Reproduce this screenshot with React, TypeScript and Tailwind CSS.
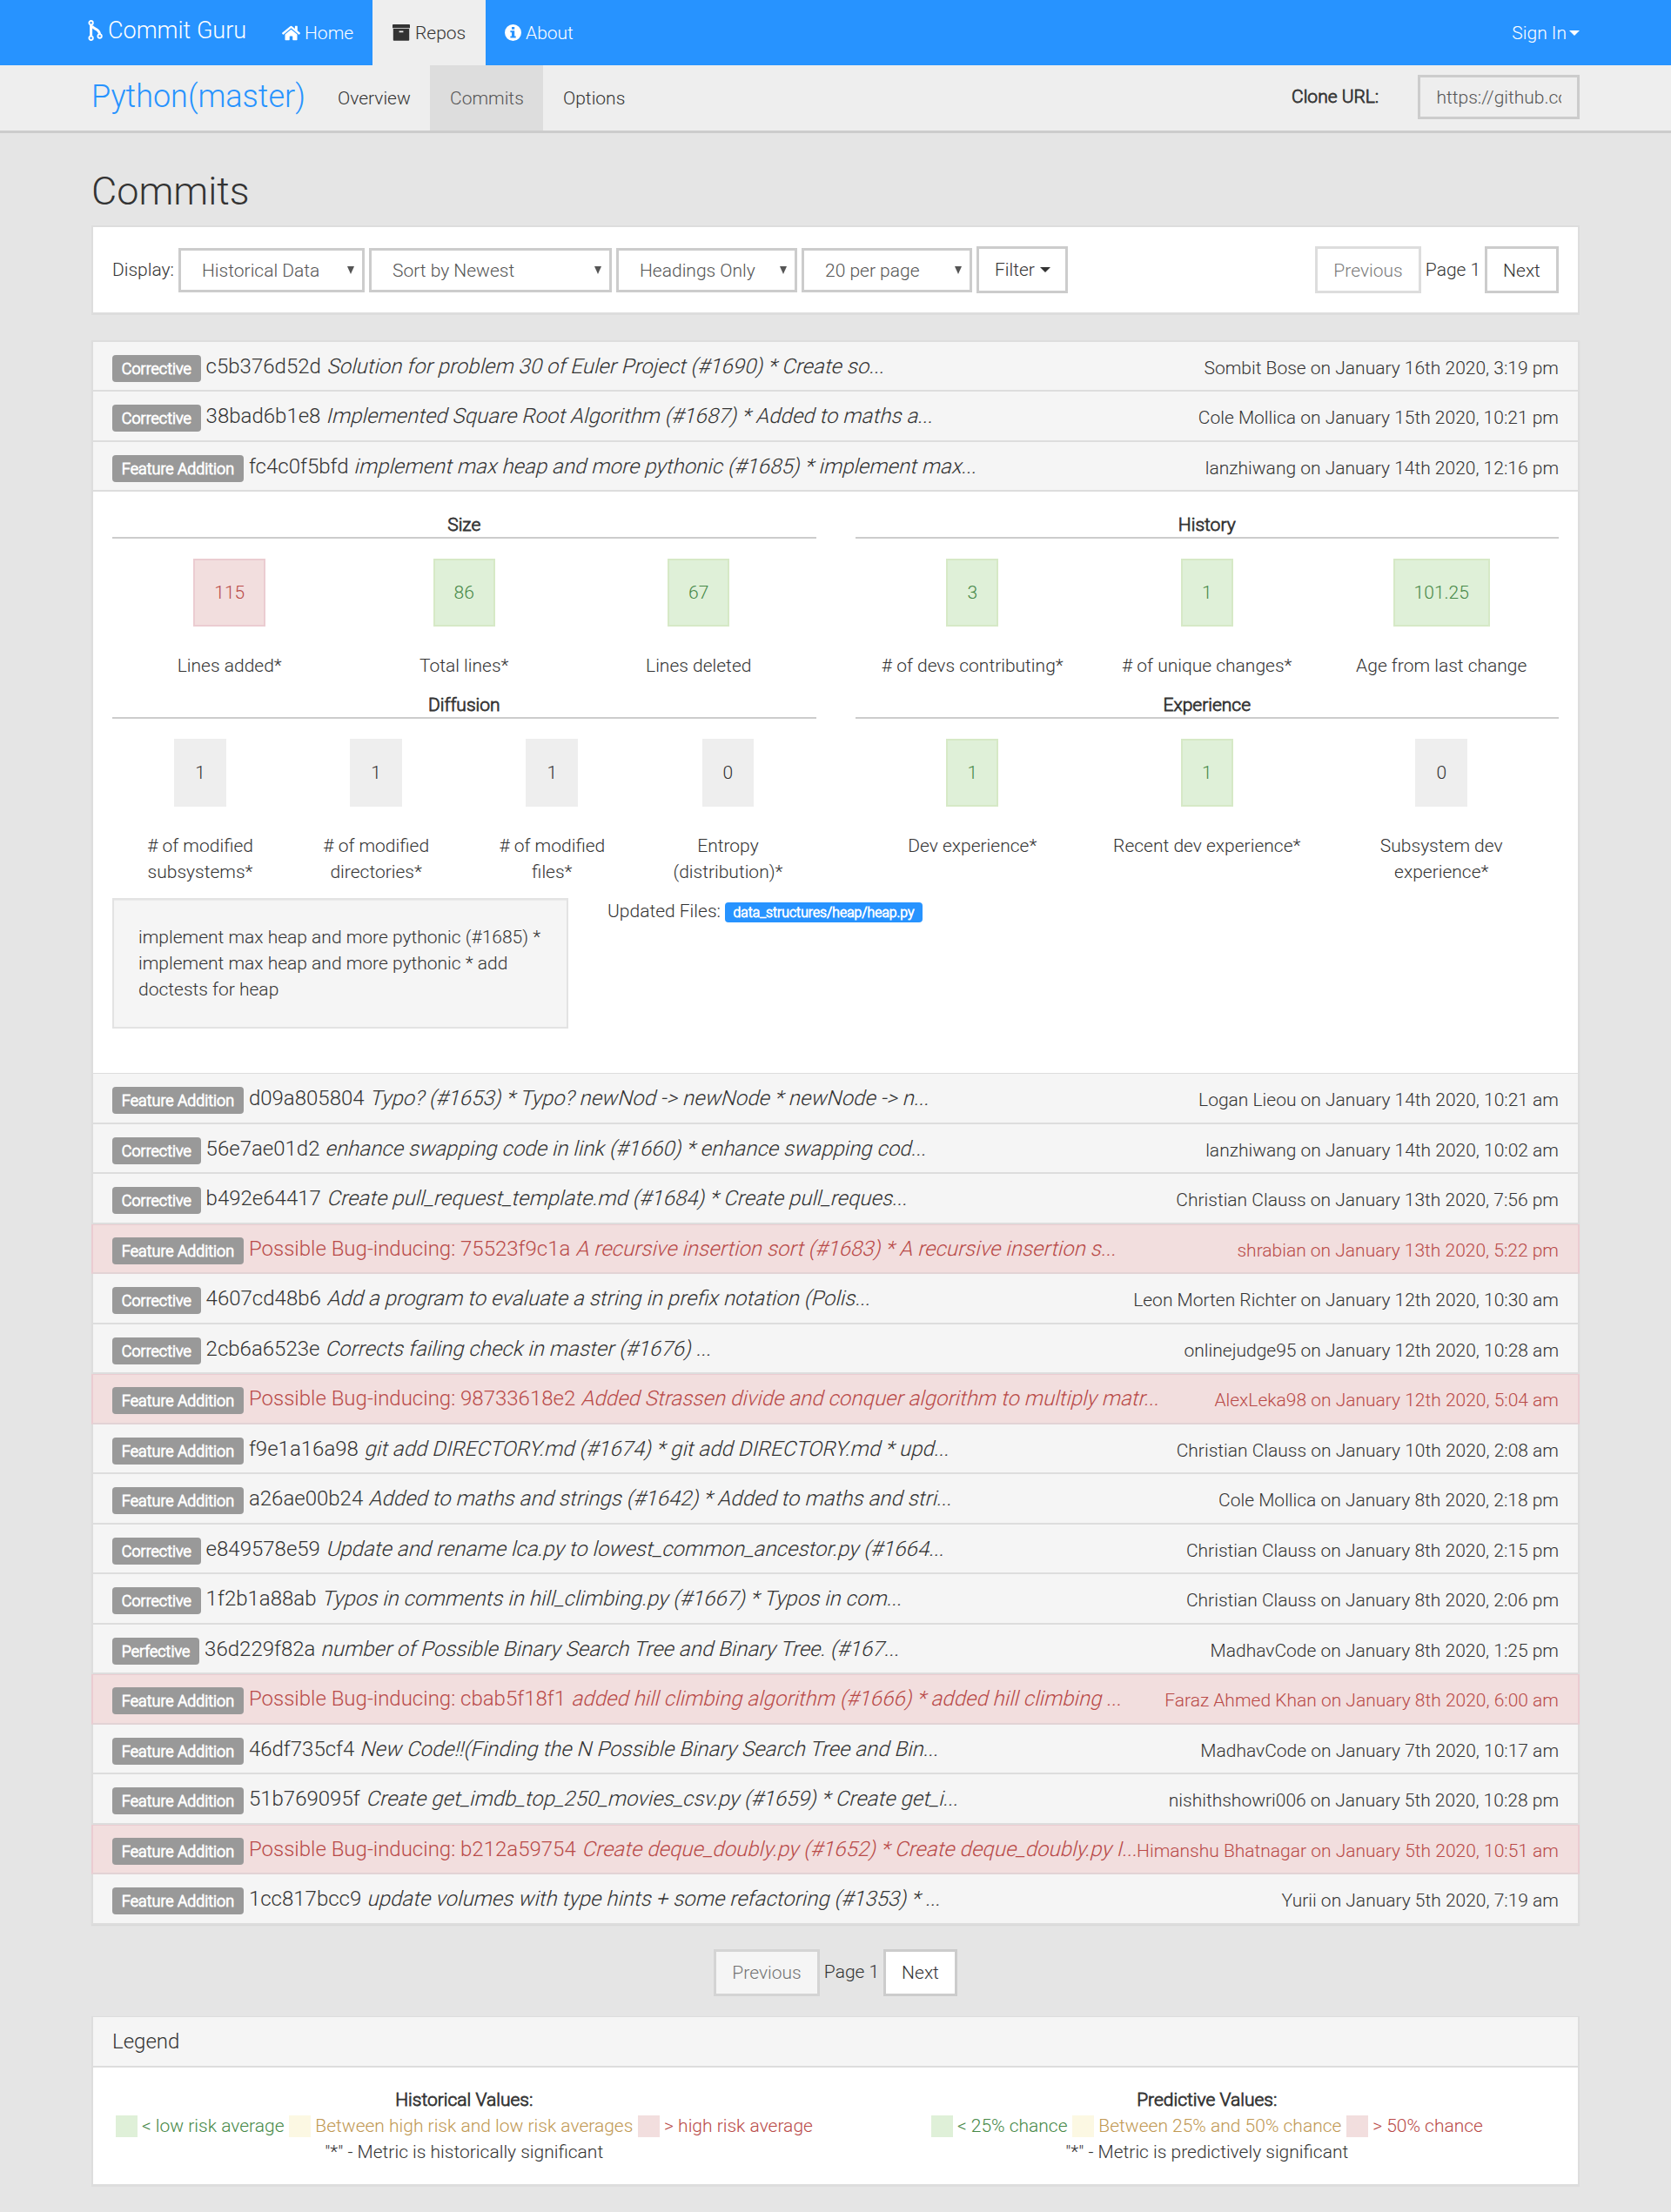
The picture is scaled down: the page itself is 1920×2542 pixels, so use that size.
import React from "react";
import { FaHome } from "react-icons/fa";

type Commit = {
  kind: string;
  hash: string;
  message: string;
  meta: string;
  bug?: boolean;
};

const recent: Commit[] = [
  { kind: "Corrective", hash: "c5b376d52d", message: "Solution for problem 30 of Euler Project (#1690) * Create so...", meta: "Sombit Bose on January 16th 2020, 3:19 pm" },
  { kind: "Corrective", hash: "38bad6b1e8", message: "Implemented Square Root Algorithm (#1687) * Added to maths a...", meta: "Cole Mollica on January 15th 2020, 10:21 pm" },
  { kind: "Feature Addition", hash: "fc4c0f5bfd", message: "implement max heap and more pythonic (#1685) * implement max...", meta: "lanzhiwang on January 14th 2020, 12:16 pm" },
];

const older: Commit[] = [
  { kind: "Feature Addition", hash: "d09a805804", message: "Typo? (#1653) * Typo? newNod -> newNode * newNode -> n...", meta: "Logan Lieou on January 14th 2020, 10:21 am" },
  { kind: "Corrective", hash: "56e7ae01d2", message: "enhance swapping code in link (#1660) * enhance swapping cod...", meta: "lanzhiwang on January 14th 2020, 10:02 am" },
  { kind: "Corrective", hash: "b492e64417", message: "Create pull_request_template.md (#1684) * Create pull_reques...", meta: "Christian Clauss on January 13th 2020, 7:56 pm" },
  { kind: "Feature Addition", hash: "75523f9c1a", message: "A recursive insertion sort (#1683) * A recursive insertion s...", meta: "shrabian on January 13th 2020, 5:22 pm", bug: true },
  { kind: "Corrective", hash: "4607cd48b6", message: "Add a program to evaluate a string in prefix notation (Polis...", meta: "Leon Morten Richter on January 12th 2020, 10:30 am" },
  { kind: "Corrective", hash: "2cb6a6523e", message: "Corrects failing check in master (#1676) ...", meta: "onlinejudge95 on January 12th 2020, 10:28 am" },
  { kind: "Feature Addition", hash: "98733618e2", message: "Added Strassen divide and conquer algorithm to multiply matr...", meta: "AlexLeka98 on January 12th 2020, 5:04 am", bug: true },
  { kind: "Feature Addition", hash: "f9e1a16a98", message: "git add DIRECTORY.md (#1674) * git add DIRECTORY.md * upd...", meta: "Christian Clauss on January 10th 2020, 2:08 am" },
  { kind: "Feature Addition", hash: "a26ae00b24", message: "Added to maths and strings (#1642) * Added to maths and stri...", meta: "Cole Mollica on January 8th 2020, 2:18 pm" },
  { kind: "Corrective", hash: "e849578e59", message: "Update and rename lca.py to lowest_common_ancestor.py (#1664...", meta: "Christian Clauss on January 8th 2020, 2:15 pm" },
  { kind: "Corrective", hash: "1f2b1a88ab", message: "Typos in comments in hill_climbing.py (#1667) * Typos in com...", meta: "Christian Clauss on January 8th 2020, 2:06 pm" },
  { kind: "Perfective", hash: "36d229f82a", message: "number of Possible Binary Search Tree and Binary Tree. (#167...", meta: "MadhavCode on January 8th 2020, 1:25 pm" },
  { kind: "Feature Addition", hash: "cbab5f18f1", message: "added hill climbing algorithm (#1666) * added hill climbing ...", meta: "Faraz Ahmed Khan on January 8th 2020, 6:00 am", bug: true },
  { kind: "Feature Addition", hash: "46df735cf4", message: "New Code!!(Finding the N Possible Binary Search Tree and Bin...", meta: "MadhavCode on January 7th 2020, 10:17 am" },
  { kind: "Feature Addition", hash: "51b769095f", message: "Create get_imdb_top_250_movies_csv.py (#1659) * Create get_i...", meta: "nishithshowri006 on January 5th 2020, 10:28 pm" },
  { kind: "Feature Addition", hash: "b212a59754", message: "Create deque_doubly.py (#1652) * Create deque_doubly.py I...", meta: "Himanshu Bhatnagar on January 5th 2020, 10:51 am", bug: true },
  { kind: "Feature Addition", hash: "1cc817bcc9", message: "update volumes with type hints + some refactoring (#1353) * ...", meta: "Yurii on January 5th 2020, 7:19 am" },
];

function MergeIcon() {
  return (
    <svg className="-mt-[6px] h-6 w-[17px]" viewBox="0 0 17 24" fill="none" stroke="currentColor" strokeWidth="1.9">
      <circle cx="3.6" cy="3.2" r="2.2" />
      <circle cx="3.6" cy="20.8" r="2.2" />
      <circle cx="13.6" cy="18.6" r="2.2" />
      <path d="M3.6 5.4V18.6" strokeWidth="3" />
      <path d="M4.6 6.6C5.4 10.6 12.8 9.2 13.6 16.4" strokeWidth="3" />
    </svg>
  );
}

function ArchiveIcon() {
  return (
    <svg className="h-[19px] w-5" viewBox="0 0 20 19" fill="currentColor">
      <path d="M0.8 0h18.4q.8 0 .8.8v3.4H0V.8Q0 0 .8 0Z" />
      <path fillRule="evenodd" d="M.8 5h18.4v12.9q0 .8-.8.8H1.6q-.8 0-.8-.8ZM7.6 7.6v1.6h4.8V7.6Z" />
    </svg>
  );
}

function InfoIcon() {
  return (
    <svg className="h-[19px] w-[19px]" viewBox="0 0 19 19" fill="currentColor">
      <path fillRule="evenodd" d="M9.5 0a9.5 9.5 0 1 0 0 19a9.5 9.5 0 0 0 0-19ZM8 2.9h3.2v2.8H8ZM6.4 7.2h4.8v6.3h1.5v2H6.4v-2H8V9.2H6.4Z" />
    </svg>
  );
}

function Caret() {
  return <span className="inline-block border-x-6 border-t-6 border-x-transparent border-t-current" />;
}

function Select({ label, width }: { label: string; width: string }) {
  return (
    <div className={`flex h-[51px] items-center justify-between border-3 border-[#ccc] bg-white pr-[9px] pl-6 text-[#555] ${width}`}>
      <span className="pt-px">{label}</span>
      <span className="border-x-[4.5px] border-t-[9px] border-x-transparent border-t-[#555]" />
    </div>
  );
}

function Pager() {
  return (
    <div className="flex items-center">
      <button className="flex h-[54px] w-[122px] items-center justify-center border-3 border-[#ccc] bg-white pt-px opacity-65">Previous</button>
      <span className="-mt-px w-[73px] text-center">Page 1</span>
      <button className="flex h-[54px] w-[85px] items-center justify-center border-3 border-[#ccc] bg-white pt-px">Next</button>
    </div>
  );
}

function Row({ commit }: { commit: Commit }) {
  const tone = commit.bug
    ? "-mx-0.5 border-x-2 border-x-[#ebccd1] border-b-[#e2d3d5] bg-[#f2dede] text-[#b94a48] shadow-[inset_0_1px_#ebccd1]"
    : "border-b-[#ddd] bg-[#f5f5f5]";
  return (
    <div className={`flex h-[57.5px] items-start justify-between border-b-2 px-[22px] whitespace-nowrap ${tone}`}>
      <h4 className="flex items-start text-2xl leading-[57px]">
        <span className="mt-[15px] mr-[6px] h-[31px] rounded-[4px] bg-[#999] px-[10.8px] text-lg leading-[31px] text-white [-webkit-text-stroke:0.9px]">
          {commit.kind}
        </span>
        <span>
          {commit.bug ? "Possible Bug-inducing: " : ""}
          {commit.hash}{" "}
          <em className="inline-block origin-[0_37px] -skew-x-[14deg] not-italic">{commit.message}</em>
        </span>
      </h4>
      <span className="leading-[61px]">{commit.meta}</span>
    </div>
  );
}

type Metric = { value: string; label: string; tone: "good" | "bad" | "none" };

const tones = {
  good: "border-[#d6e9c6] bg-[#dff0d8] text-[#468847]",
  bad: "border-[#ebccd1] bg-[#f2dede] text-[#b94a48]",
  none: "border-[#eee] bg-[#eee]",
};

function Metrics({ title, items, height }: { title: string; items: Metric[]; height: string }) {
  return (
    <section className={`w-[808.5px] text-center ${height}`}>
      <h5 className="h-8 border-b-2 border-[#ccc] leading-[33px] [-webkit-text-stroke:0.8px]">{title}</h5>
      <div className="flex">
        {items.map((m) => (
          <div key={m.label} className="flex flex-1 basis-0 flex-col items-center px-[22px] pt-[23px]">
            <span className={`flex h-[78px] items-center border-2 px-[22px] ${tones[m.tone]}`}>{m.value}</span>
            <span className="mt-[30px]">{m.label}</span>
          </div>
        ))}
      </div>
    </section>
  );
}

function Swatch({ tone, text }: { tone: string; text: string }) {
  return (
    <span className="flex items-center gap-[5.4px]">
      <span className={`h-[25px] w-[25px] ${tone}`} />
      {text}
    </span>
  );
}

function LegendColumn({ title, low, mid, high, note }: Record<"title" | "low" | "mid" | "high" | "note", string>) {
  return (
    <div className="flex w-[808.5px] flex-col items-center">
      <strong className="font-light [-webkit-text-stroke:0.8px]">{title}</strong>
      <div className="flex gap-[5.4px]">
        <span className="text-[#468847]"><Swatch tone="bg-[#dff0d8]" text={low} /></span>
        <span className="text-[#c09853]"><Swatch tone="bg-[#fcf8e3]" text={mid} /></span>
        <span className="text-[#b94a48]"><Swatch tone="bg-[#f2dede]" text={high} /></span>
      </div>
      <span>{note}</span>
    </div>
  );
}

export default function App() {
  return (
    <div className="h-[2542px] w-[1920px] overflow-hidden bg-[#e5e5e5] font-['Roboto',sans-serif] text-[21px] leading-[30px] font-light text-[#333]">
      <header className="h-[75px] bg-[#2793ff] px-[101px] text-white">
        <nav className="flex h-full items-center">
          <a className="flex w-[201px] items-center text-[27px]">
            <MergeIcon />
            <span className="-mt-[5px] ml-[6px]">Commit Guru</span>
          </a>
          <a className="flex h-full w-[126px] items-center pl-[22px]">
            <FaHome className="h-5 w-[21px]" />
            <span className="ml-[5px]">Home</span>
          </a>
          <a className="flex h-full w-[130px] items-center bg-[#eee] pl-[23px] text-[#333]">
            <ArchiveIcon />
            <span className="ml-[6px]">Repos</span>
          </a>
          <a className="flex h-full items-center pl-[22px]">
            <InfoIcon />
            <span className="ml-[5px]">About</span>
          </a>
          <a className="mr-[4px] ml-auto flex items-center gap-[3px]">
            Sign In
            <Caret />
          </a>
        </nav>
      </header>

      <nav className="flex h-[78px] border-b-3 border-[#ccc] bg-[#eee] px-[105px]">
        <a className="w-[260px] text-4xl leading-[73px] text-[#2793ff]">Python(master)</a>
        <a className="w-[129px] pl-[23px] leading-[77px]">Overview</a>
        <a className="w-[130px] bg-[#ddd] pl-[23px] leading-[77px] text-[#555]">Commits</a>
        <a className="pl-[23px] leading-[77px]">Options</a>
        <label className="ml-auto w-[145px] leading-[72px] [-webkit-text-stroke:0.8px]">Clone URL:</label>
        <div className="mt-[11px] h-[51px] w-[186px] border-3 border-[#ccc] px-[18.5px] leading-[46px] text-[#555]">
          <div className="overflow-hidden whitespace-nowrap">https://github.com/TheAlgorithms/Python</div>
        </div>
      </nav>

      <main className="mx-[105px]">
        <h1 className="mt-[42px] h-16 text-[45px] leading-[49px]">Commits</h1>

        <section className="flex h-[103px] items-center justify-between border-2 border-b-3 border-[#ddd] bg-white px-[22px]">
          <div className="flex items-center">
            <span className="w-[76px]">Display:</span>
            <div className="flex items-center gap-[5px]">
              <Select label="Historical Data" width="w-[214px]" />
              <Select label="Sort by Newest" width="w-[279px]" />
              <Select label="Headings Only" width="w-[208px]" />
              <Select label="20 per page" width="w-[196px]" />
              <button className="flex h-[54px] w-[105px] items-center gap-[6px] border-3 border-[#ccc] bg-white pl-[18px]">
                Filter
                <Caret />
              </button>
            </div>
          </div>
          <Pager />
        </section>

        <section className="mt-[28.5px] border-x-2 border-t-2 border-[#ddd] shadow-[0_1px_1px_#d9d9d9]">
          {recent.map((c) => (
            <Row key={c.hash} commit={c} />
          ))}
          <div className="h-[669px] border-b border-[#ddd] bg-white px-[22px] pt-[22px]">
            <div className="flex justify-between">
              <Metrics
                title="Size"
                height="h-[207px]"
                items={[
                  { value: "115", label: "Lines added*", tone: "bad" },
                  { value: "86", label: "Total lines*", tone: "good" },
                  { value: "67", label: "Lines deleted", tone: "good" },
                ]}
              />
              <Metrics
                title="History"
                height="h-[207px]"
                items={[
                  { value: "3", label: "# of devs contributing*", tone: "good" },
                  { value: "1", label: "# of unique changes*", tone: "good" },
                  { value: "101.25", label: "Age from last change", tone: "good" },
                ]}
              />
            </div>
            <div className="flex justify-between">
              <Metrics
                title="Diffusion"
                height="h-[238px]"
                items={[
                  { value: "1", label: "# of modified subsystems*", tone: "none" },
                  { value: "1", label: "# of modified directories*", tone: "none" },
                  { value: "1", label: "# of modified files*", tone: "none" },
                  { value: "0", label: "Entropy (distribution)*", tone: "none" },
                ]}
              />
              <Metrics
                title="Experience"
                height="h-[238px]"
                items={[
                  { value: "1", label: "Dev experience*", tone: "good" },
                  { value: "1", label: "Recent dev experience*", tone: "good" },
                  { value: "0", label: "Subsystem dev experience*", tone: "none" },
                ]}
              />
            </div>
            <div className="flex items-start">
              <div className="h-[150px] w-[524px] border-2 border-[#e3e3e3] bg-[#f5f5f5] px-7 pt-7 shadow-[inset_0_1px_1px_rgba(0,0,0,0.05)]">
                implement max heap and more pythonic (#1685) * implement max heap and more pythonic * add doctests for heap
              </div>
              <span className="ml-[45px]">Updated Files:</span>
              <span className="mt-[5px] ml-[5px] h-[23px] rounded-[4px] bg-[#2793ff] px-[9.5px] text-[15.75px] leading-[23px] text-white [-webkit-text-stroke:0.8px]">
                data_structures/heap/heap.py
              </span>
            </div>
          </div>
          {older.map((c) => (
            <Row key={c.hash} commit={c} />
          ))}
        </section>

        <div className="mt-7 flex justify-center">
          <Pager />
        </div>

        <section className="mt-[23.5px] h-[196px] border-2 border-t border-b-3 border-[#ddd] bg-white">
          <h4 className="h-[58px] border-b-2 border-[#ddd] bg-[#f5f5f5] px-[22px] text-2xl leading-[57px]">Legend</h4>
          <div className="flex justify-between px-[22px] pt-[22px]">
            <LegendColumn
              title="Historical Values:"
              low="< low risk average"
              mid="Between high risk and low risk averages"
              high="> high risk average"
              note={'"*" - Metric is historically significant'}
            />
            <LegendColumn
              title="Predictive Values:"
              low="< 25% chance"
              mid="Between 25% and 50% chance"
              high="> 50% chance"
              note={'"*" - Metric is predictively significant'}
            />
          </div>
        </section>
      </main>
    </div>
  );
}
